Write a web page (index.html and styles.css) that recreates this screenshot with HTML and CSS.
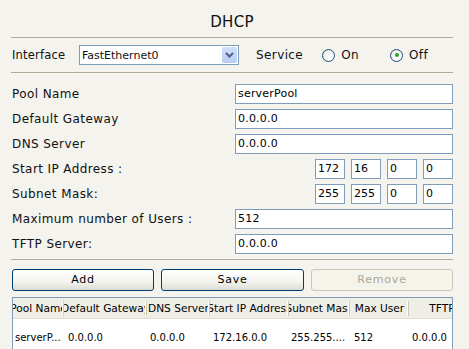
FILE: index.html
```html
<!DOCTYPE html>
<html>
<head>
<meta charset="utf-8">
<link rel="stylesheet" href="styles.css">
</head>
<body>
<div class="panel">
  <div class="title">DHCP</div>
  <div class="iface-row">
    <span class="iface-label">Interface</span>
    <div class="select">
      <span class="select-text">FastEthernet0</span>
      <span class="drop"><svg width="9" height="6" viewBox="0 0 9 6"><path d="M1 1 L4.5 4.5 L8 1" fill="none" stroke="#4d6185" stroke-width="2"/></svg></span>
    </div>
    <span class="service">Service</span>
    <span class="radio"><span class="circle"></span>On</span>
    <span class="radio radio-off"><span class="circle checked"></span>Off</span>
  </div>
  <div class="form">
    <div class="row"><span class="label">Pool Name</span><div class="input">serverPool</div></div>
    <div class="row"><span class="label">Default Gateway</span><div class="input">0.0.0.0</div></div>
    <div class="row"><span class="label">DNS Server</span><div class="input">0.0.0.0</div></div>
    <div class="row"><span class="label">Start IP Address :</span>
      <div class="ip"><div class="oct">172</div><div class="oct">16</div><div class="oct">0</div><div class="oct">0</div></div></div>
    <div class="row"><span class="label">Subnet Mask:</span>
      <div class="ip"><div class="oct">255</div><div class="oct">255</div><div class="oct">0</div><div class="oct">0</div></div></div>
    <div class="row"><span class="label">Maximum number of Users :</span><div class="input">512</div></div>
    <div class="row"><span class="label">TFTP Server:</span><div class="input">0.0.0.0</div></div>
  </div>
  <div class="buttons">
    <div class="btn">Add</div>
    <div class="btn">Save</div>
    <div class="btn disabled">Remove</div>
  </div>
  <div class="table">
    <div class="thead">
      <div class="th c1"><span>Pool Name</span></div>
      <div class="th c2"><span>Default Gateway</span></div>
      <div class="th c3"><span>DNS Server</span></div>
      <div class="th c4"><span>Start IP Address</span></div>
      <div class="th c5"><span>Subnet Mask</span></div>
      <div class="th c6"><span>Max User</span></div>
      <div class="th c7"><span>TFTP Server</span></div>
    </div>
    <div class="trow">
      <div class="td c1">serverP...</div>
      <div class="td c2">0.0.0.0</div>
      <div class="td c3">0.0.0.0</div>
      <div class="td c4">172.16.0.0</div>
      <div class="td c5">255.255....</div>
      <div class="td c6">512</div>
      <div class="td c7">0.0.0.0</div>
    </div>
  </div>
</div>
</body>
</html>
```
FILE: styles.css
```css
html, body {
  margin: 0;
  padding: 0;
  background: #f4f3ee;
  overflow: hidden;
}
body {
  width: 469px;
  height: 349px;
  font-family: "DejaVu Sans", Verdana, sans-serif;
  color: #000;
}
.panel {
  padding: 0 16px 0 11px;
}
.title {
  height: 37px;
  border-bottom: 1px solid #b0ac9c;
  font-size: 15px;
  line-height: 44px;
  text-align: center;
  letter-spacing: 0.3px;
  color: #111;
}
.iface-row {
  height: 34px;
  border-bottom: 1px solid #b0ac9c;
  display: flex;
  align-items: center;
  font-size: 12px;
  letter-spacing: 0.4px;
  color: #111;
}
.iface-label {
  width: 67px;
  padding-left: 1px;
  font-size: 11.5px;
  letter-spacing: 0.2px;
}
.select {
  width: 158px;
  height: 18px;
  border: 1px solid #7f9db9;
  background: #fff;
  display: flex;
  align-items: center;
  justify-content: space-between;
}
.select-text {
  font-size: 11px;
  letter-spacing: 0;
  padding-left: 2px;
}
.drop {
  width: 15px;
  height: 16px;
  margin-right: 1px;
  border-radius: 2px;
  background: linear-gradient(#d2def9, #b9cbf5);
  display: flex;
  align-items: center;
  justify-content: center;
}
.service {
  margin-left: 17px;
}
.radio {
  display: flex;
  align-items: center;
  margin-left: 19px;
}
.radio-off {
  margin-left: 31px;
}
.circle {
  width: 11px;
  height: 11px;
  border: 1px solid #1c5180;
  border-radius: 50%;
  background: radial-gradient(circle at 65% 65%, #fff 20%, #dcdcd4 100%);
  margin-right: 6px;
  position: relative;
}
.circle.checked::after {
  content: "";
  position: absolute;
  left: 3.5px;
  top: 3.5px;
  width: 4px;
  height: 4px;
  border-radius: 50%;
  background: #2ba12b;
}
.form {
  padding: 11px 0 5px 1px;
  border-bottom: 1px solid #b0ac9c;
}
.row {
  display: flex;
  align-items: center;
  justify-content: space-between;
  height: 20px;
  margin-bottom: 5px;
}
.row:last-child {
  margin-bottom: 0;
}
.label {
  font-size: 12px;
  letter-spacing: 0.4px;
  color: #111;
}
.input {
  width: 214px;
  height: 18px;
  border: 1px solid #7f9db9;
  background: #fff;
  font-size: 11px;
  letter-spacing: 0.2px;
  line-height: 18px;
  padding-left: 2px;
}
.ip {
  display: flex;
  gap: 6px;
}
.oct {
  width: 26px;
  height: 18px;
  border: 1px solid #7f9db9;
  background: #fff;
  font-size: 11px;
  line-height: 18px;
  padding-left: 2px;
}
.buttons {
  display: grid;
  grid-template-columns: 142px 143px 142px;
  gap: 7px;
  padding: 9px 1px 0 1px;
}
.btn {
  height: 20px;
  border: 1px solid #003c74;
  border-radius: 3px;
  background: linear-gradient(#ffffff, #f3f3ef 60%, #dedcd2);
  font-size: 11px;
  letter-spacing: 0.8px;
  line-height: 20px;
  text-align: center;
}
.btn.disabled {
  border-color: #c9c7ba;
  background: #f5f4ea;
  color: #aca899;
}
.table {
  margin: 6px 0 0 1px;
  width: 439px;
  height: 60px;
  border: 1px solid #7f9db9;
  background: #fff;
  overflow: hidden;
  font-size: 10px;
}
.thead, .trow {
  display: flex;
}
.thead {
  height: 20px;
  background: #efeee6;
  border-bottom: 1px solid #e2dfd0;
  font-size: 10.6px;
}
.th {
  flex: none;
  display: flex;
  justify-content: center;
  align-items: center;
  overflow: hidden;
  white-space: nowrap;
  position: relative;
  box-sizing: border-box;
}
.th span {
  flex: none;
}
.th::after {
  content: "";
  position: absolute;
  right: 0;
  top: 3px;
  bottom: 2px;
  width: 1px;
  background: #cbc8b8;
  box-shadow: -1px 0 0 #fff;
}
.trow {
  height: 36px;
  align-items: center;
}
.td {
  flex: none;
  white-space: nowrap;
  overflow: hidden;
  padding-left: 3px;
  box-sizing: border-box;
}
.c1 { width: 51px; }
.c2 { width: 83px; }
.c3 { width: 63px; }
.c4 { width: 79px; }
.c5 { width: 61px; }
.c6 { width: 59px; }
.c7 { width: 104px; }
.td.c1, .td.c5 { padding-left: 2px; }
.td.c2, .td.c6 { padding-left: 4px; }
```
